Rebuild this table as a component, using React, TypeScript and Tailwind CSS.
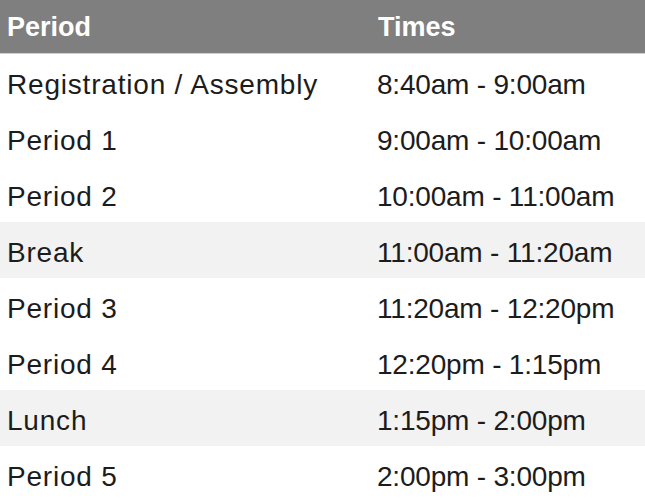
const rows: [string, string, boolean][] = [
  ["Registration / Assembly", "8:40am - 9:00am", false],
  ["Period 1", "9:00am - 10:00am", false],
  ["Period 2", "10:00am - 11:00am", false],
  ["Break", "11:00am - 11:20am", true],
  ["Period 3", "11:20am - 12:20pm", false],
  ["Period 4", "12:20pm - 1:15pm", false],
  ["Lunch", "1:15pm - 2:00pm", true],
  ["Period 5", "2:00pm - 3:00pm", false],
];

export default function App() {
  return (
    <div className="w-[645px] h-[499px] overflow-hidden bg-white font-['Liberation_Sans',sans-serif] text-[#1c1c1c]">
      <div className="grid h-[54px] grid-cols-[371px_1fr] items-center border-b border-[#cfcfcf] bg-[#7f7f7f] pt-[1px] text-[27px] font-bold text-white">
        <span className="pl-[7px]">Period</span>
        <span className="pl-[7px]">Times</span>
      </div>
      {rows.map(([name, time, shaded]) => (
        <div
          key={name}
          className={`grid h-[56px] grid-cols-[371px_1fr] items-center pt-[5px] text-[28px] ${shaded ? "bg-[#f2f2f2]" : "bg-white"}`}
        >
          <span className="pl-[7px] tracking-[0.8px]">{name}</span>
          <span className="pl-[6px] tracking-[-0.2px]">{time}</span>
        </div>
      ))}
    </div>
  );
}
